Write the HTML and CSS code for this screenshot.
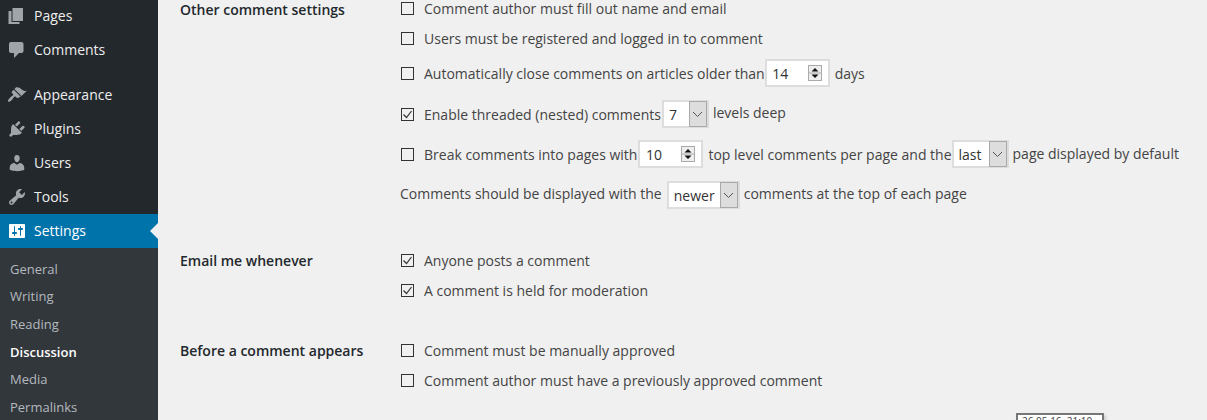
FILE: index.html
```html
<!DOCTYPE html>
<html lang="en">
<head>
  <meta charset="UTF-8">
  <title>Discussion Settings</title>
  <link rel="stylesheet" href="styles.css">
</head>
<body>
  <div class="wrap">
    <!-- Admin menu -->
    <nav class="sidebar">
      <a class="menu-item"><svg class="icon" viewBox="0 0 20 20"><path d="M5.5 15V2H16v13H5.5zM4.5 16h8v2H1.5V5h3v11z"/></svg><span>Pages</span></a>
      <a class="menu-item"><svg class="icon" viewBox="0 0 20 20"><path d="M4 2h10.5c1.1 0 2 .9 2 2v7c0 1.1-.9 2-2 2H12l-5 5v-5H4c-1.1 0-2-.9-2-2V4c0-1.1.9-2 2-2z"/></svg><span>Comments</span></a>
      <div class="menu-sep"></div>
      <a class="menu-item"><svg class="icon" viewBox="0 0 20 20"><path d="M14.48 11.06L7.41 3.99l1.5-1.5c.5-.56 2.3-.47 3.51.32 1.21.8 1.43 1.28 2.91 2.1 1.18.64 2.45 1.26 4.45.85zm-.71.71L6.7 4.7 4.93 6.47c-.39.39-.39 1.02 0 1.41l1.06 1.06c.39.39.39 1.03 0 1.42-.6.6-1.43 1.11-2.21 1.69-.35.26-.7.53-1.01.84-1.34 1.34-2.37 2.77-1.57 3.61.8.84 2.26-.23 3.58-1.58.3-.3.57-.65.83-1 .58-.78 1.09-1.61 1.69-2.21.39-.39 1.02-.39 1.41 0l1.06 1.06c.39.39 1.02.39 1.41 0z"/></svg><span>Appearance</span></a>
      <a class="menu-item"><svg class="icon" viewBox="0 0 20 20"><path d="M13.11 4.36L9.87 7.6 8 5.73l3.24-3.24c.35-.34 1.05-.2 1.56.32.52.51.66 1.21.31 1.55zm-8 1.77l.91-1.12 9.01 9.01-1.19.84c-.71.71-2.63 1.16-3.82 1.16H6.14L4.9 17.26c-.59.59-1.54.59-2.12 0-.59-.58-.59-1.53 0-2.12l1.24-1.24v-3.88c0-1.13.4-3.19 1.09-3.89zm7.26 3.97l3.24-3.24c.34-.35 1.04-.21 1.55.31.52.51.66 1.21.31 1.55l-3.24 3.25z"/></svg><span>Plugins</span></a>
      <a class="menu-item"><svg class="icon" viewBox="0 0 20 20"><path d="M10 9.25c-2.27 0-2.73-3.44-2.73-3.44C7 4.02 7.82 2 9.97 2c2.16 0 2.98 2.02 2.71 3.81 0 0-.41 3.44-2.68 3.44zm0 2.57L12.72 10c2.39 0 4.52 2.33 4.52 4.53v2.49s-3.65 1.13-7.24 1.13c-3.65 0-7.24-1.13-7.24-1.13v-2.49c0-2.25 1.94-4.48 4.47-4.48z"/></svg><span>Users</span></a>
      <a class="menu-item"><svg class="icon" viewBox="0 0 20 20"><path d="M16.68 9.77c-1.34 1.34-3.3 1.67-4.95.99l-5.41 6.52c-.99.99-2.59.99-3.58 0s-.99-2.59 0-3.57l6.52-5.42c-.68-1.65-.35-3.61.99-4.95 1.28-1.28 3.12-1.62 4.72-1.06l-2.89 2.89 2.82 2.82 2.86-2.87c.53 1.58.18 3.39-1.08 4.65zM3.81 16.21c.4.39 1.04.39 1.43 0 .4-.4.4-1.04 0-1.43-.39-.4-1.03-.4-1.43 0-.39.39-.39 1.03 0 1.43z"/></svg><span>Tools</span></a>
      <a class="menu-item active"><svg class="icon" viewBox="0 0 20 20"><path d="M18 16V4c0-.55-.45-1-1-1H3c-.55 0-1 .45-1 1v12c0 .55.45 1 1 1h14c.55 0 1-.45 1-1zM8 11h1c.55 0 1 .45 1 1s-.45 1-1 1H8v1.5c0 .28-.22.5-.5.5s-.5-.22-.5-.5V13H6c-.55 0-1-.45-1-1s.45-1 1-1h1V5.5c0-.28.22-.5.5-.5s.5.22.5.5V11zm5-2h-1c-.55 0-1-.45-1-1s.45-1 1-1h1V5.5c0-.28.22-.5.5-.5s.5.22.5.5V7h1c.55 0 1 .45 1 1s-.45 1-1 1h-1v5.5c0 .28-.22.5-.5.5s-.5-.22-.5-.5V9z"/></svg><span>Settings</span></a>
      <div class="submenu">
        <a>General</a>
        <a>Writing</a>
        <a>Reading</a>
        <a class="current">Discussion</a>
        <a>Media</a>
        <a>Permalinks</a>
      </div>
    </nav>

    <!-- Settings form -->
    <main class="content">
      <section class="group group-first">
        <h3>Other comment settings</h3>
        <div class="fields">
          <div class="row row-text row-a"><span class="check"></span><span>Comment author must fill out name and email</span></div>
          <div class="row row-text"><span class="check"></span><span>Users must be registered and logged in to comment</span></div>
          <div class="row row-ctl">
            <span class="check"></span><span>Automatically close comments on articles older than</span>
            <span class="num num-tight"><span class="val">14</span><svg class="spin" viewBox="0 0 14 16"><rect x=".5" y=".5" width="13" height="15" fill="#eee" stroke="#aaa"/><path d="M.5 8h13" stroke="#aaa"/><path d="M7 3l3.5 3.5h-7zM7 13l3.5-3.5h-7z" fill="#111"/></svg></span>
            <span class="after">days</span>
          </div>
          <div class="row row-ctl row-tight">
            <span class="check on"><svg viewBox="0 0 11 11"><path d="M1.5 5.5l3 3 5-6.5" fill="none" stroke="#333" stroke-width="1.2"/></svg></span><span>Enable threaded (nested) comments</span>
            <span class="sel sel-s"><span class="val">7</span><span class="arrow"><svg viewBox="0 0 11 7"><path d="M1 1l4.5 4.5L10 1" fill="none" stroke="#555"/></svg></span></span>
            <span class="after-s up-2">levels deep</span>
          </div>
          <div class="row row-ctl">
            <span class="check"></span><span>Break comments into pages with</span>
            <span class="num"><span class="val">10</span><svg class="spin" viewBox="0 0 14 16"><rect x=".5" y=".5" width="13" height="15" fill="#eee" stroke="#aaa"/><path d="M.5 8h13" stroke="#aaa"/><path d="M7 3l3.5 3.5h-7zM7 13l3.5-3.5h-7z" fill="#111"/></svg></span>
            <span class="after">top level comments per page and the</span>
            <span class="sel sel-m"><span class="val">last</span><span class="arrow"><svg viewBox="0 0 11 7"><path d="M1 1l4.5 4.5L10 1" fill="none" stroke="#555"/></svg></span></span>
            <span class="after-s up-1">page displayed by default</span>
          </div>
          <div class="row row-ctl">
            <span class="up-2">Comments should be displayed with the</span>
            <span class="sel sel-l"><span class="val">newer</span><span class="arrow"><svg viewBox="0 0 11 7"><path d="M1 1l4.5 4.5L10 1" fill="none" stroke="#555"/></svg></span></span>
            <span class="after-s up-2">comments at the top of each page</span>
          </div>
        </div>
      </section>

      <section class="group">
        <h3>Email me whenever</h3>
        <div class="fields">
          <div class="row row-text"><span class="check on"><svg viewBox="0 0 11 11"><path d="M1.5 5.5l3 3 5-6.5" fill="none" stroke="#333" stroke-width="1.2"/></svg></span><span>Anyone posts a comment</span></div>
          <div class="row row-text"><span class="check on"><svg viewBox="0 0 11 11"><path d="M1.5 5.5l3 3 5-6.5" fill="none" stroke="#333" stroke-width="1.2"/></svg></span><span>A comment is held for moderation</span></div>
        </div>
      </section>

      <section class="group">
        <h3>Before a comment appears</h3>
        <div class="fields">
          <div class="row row-text"><span class="check"></span><span>Comment must be manually approved</span></div>
          <div class="row row-text"><span class="check"></span><span>Comment author must have a previously approved comment</span></div>
        </div>
      </section>
    </main>
  </div>

  <div class="stamp">26.05.16, 21:10</div>
</body>
</html>
```

FILE: styles.css
```css
body { margin: 0; height: 420px; overflow: hidden; background: #f0f0f0; color: #444; font-family: "Open Sans", sans-serif; font-size: 14px; position: relative; }
.wrap { display: flex; height: 420px; overflow: hidden; }

.sidebar { width: 158px; flex: none; background: #23282d; margin-top: -1px; height: 421px; overflow: hidden; }
.menu-item { display: flex; align-items: center; gap: 7.5px; height: 34px; padding-left: 6.5px; color: #eee; position: relative; }
.menu-item span { position: relative; top: -1px; }
.menu-sep { height: 11px; }
.icon { width: 20px; height: 20px; fill: #a0a5aa; flex: none; }
.menu-item.active { background: #0073aa; color: #fff; }
.menu-item.active .icon { fill: #fff; }
.menu-item.active::after { content: ""; position: absolute; right: 0; top: 9px; border: 8px solid transparent; border-right-color: #f0f0f0; border-left-width: 0; }
.submenu { background: #32373c; padding-top: 7.8px; height: 170px; }
.submenu a { display: block; height: 27.6px; line-height: 27.6px; padding-left: 10px; font-size: 13px; color: #b4b9be; }
.submenu a.current { color: #fff; font-weight: 600; }

.content { flex: 1; padding-left: 22px; margin-top: -2px; }
.group { display: grid; grid-template-columns: 220px 1fr; margin-top: 40px; }
.group-first { margin-top: 0; margin-bottom: 41px; }
.group-first + .group { margin-top: 0; }
.group h3 { margin: 0; padding-top: 1px; font-size: 14px; font-weight: 600; line-height: 20px; color: #23282d; }
.group-first h3 { padding-top: 2px; }

.row { display: flex; align-items: center; white-space: nowrap; }
.row-text { height: 20px; margin-bottom: 10px; }
.group-first .row-text { margin-bottom: 11px; }
.group-first .row-a { margin-bottom: 10px; }
.row-ctl { height: 28px; margin-bottom: 13px; }
.row-tight { margin-bottom: 12px; }
.row:last-child { margin-bottom: 0; }
.check { width: 11px; height: 11px; border: 1px solid #333; margin: 0 10px 0 1px; flex: none; display: flex; }
.check svg { width: 11px; height: 11px; }

.num, .sel { display: inline-flex; align-items: center; height: 24px; border: 2px solid #ddd; background: #fff; color: #333; flex: none; margin-left: 1px; }
.num { width: 61px; justify-content: space-between; }
.num-tight { margin-left: 0; }
.num .val { padding-left: 5.5px; }
.spin { width: 14px; height: 16px; margin-right: 6px; }
.sel .val { padding-left: 5px; flex: 1; }
.arrow { width: 18px; height: 26px; background: #ddd; border: 1px solid #a9a9a9; box-sizing: border-box; display: flex; align-items: center; justify-content: center; }
.arrow svg { width: 11px; height: 7px; }
.sel-s { width: 43px; }
.sel-m { width: 53px; margin-left: 0; }
.sel-l { width: 69px; margin-left: 5px; }
.after { margin-left: 5px; }
.after-s { margin-left: 4px; }
.up-1, .up-2 { position: relative; }
.up-1 { top: -1px; }
.up-2 { top: -2px; }

.stamp { position: absolute; left: 1016px; top: 413px; width: 80px; height: 20px; padding-left: 4px; border: 2px solid #777; background: #fff; font-size: 10px; line-height: 12px; white-space: nowrap; color: #444; box-shadow: 2px 2px 3px rgba(0,0,0,.15); }
```
